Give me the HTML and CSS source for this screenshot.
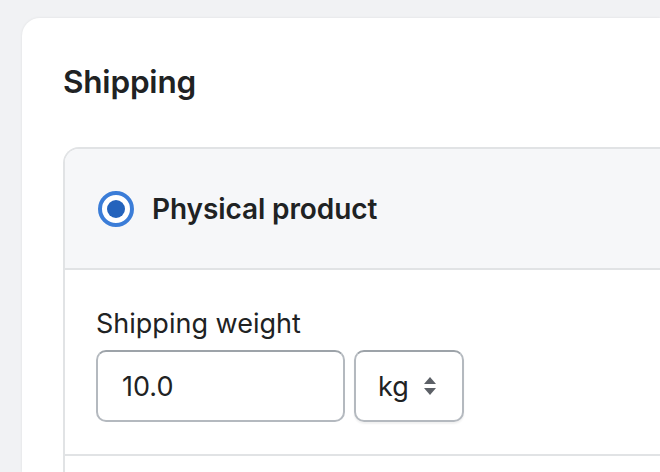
FILE: index.html
```html
<!DOCTYPE html>
<html>
<head>
<meta charset="utf-8">
<link rel="stylesheet" href="styles.css">
</head>
<body>
<div class="card">
  <h2 class="title">Shipping</h2>
  <div class="box">
    <div class="box-head">
      <span class="radio"><span class="dot"></span></span>
      <span class="option">Physical product</span>
    </div>
    <div class="box-body">
      <div class="label">Shipping weight</div>
      <div class="fields">
        <div class="input">10.0</div>
        <div class="select">
          <span>kg</span>
          <svg class="arrows" width="14" height="20" viewBox="0 0 14 20"><path d="M7 1 L13 8 H1 Z" fill="#5c6066"/><path d="M7 19 L13 12 H1 Z" fill="#5c6066"/></svg>
        </div>
      </div>
    </div>
    <div class="box-next"></div>
  </div>
</div>
</body>
</html>
```
FILE: styles.css
```css
html, body {
  margin: 0;
  padding: 0;
}
body {
  background: #f1f2f4;
  font-family: Inter, "Noto Sans", sans-serif;
  color: #202223;
  width: 660px;
  height: 472px;
  overflow: hidden;
  padding: 18px 0 0 22px;
  box-sizing: border-box;
}
.card {
  background: #fff;
  border-radius: 18px 0 0 0;
  box-shadow: 0 0 3px rgba(0,0,0,0.08);
  padding: 48px 0 0 41px;
  width: 638px;
  height: 454px;
  box-sizing: border-box;
  overflow: hidden;
}
.title {
  margin: 0;
  font-size: 31.5px;
  font-weight: 600;
  line-height: 32px;
  letter-spacing: -0.2px;
}
.box {
  margin-top: 49px;
  border: 2px solid #e1e3e5;
  border-right: none;
  border-bottom: none;
  border-radius: 16px 0 0 0;
  overflow: hidden;
}
.box-head {
  background: #f6f7f9;
  height: 119px;
  display: flex;
  align-items: center;
  padding-left: 33px;
  border-bottom: 2px solid #e1e3e5;
}
.radio {
  width: 36px;
  height: 36px;
  border-radius: 50%;
  border: 4px solid #3b7dd8;
  box-sizing: border-box;
  display: flex;
  align-items: center;
  justify-content: center;
  background: #fff;
}
.dot {
  width: 18px;
  height: 18px;
  border-radius: 50%;
  background: #2463bc;
}
.option {
  margin-left: 18px;
  font-size: 28px;
  font-weight: 600;
  letter-spacing: -0.1px;
}
.box-body {
  padding: 36px 0 32px 31px;
  border-bottom: 2px solid #e1e3e5;
}
.label {
  font-size: 27px;
  line-height: 36px;
  margin-bottom: 8px;
}
.fields {
  display: flex;
  gap: 9px;
}
.input, .select {
  height: 72px;
  box-sizing: border-box;
  border: 2px solid #b4b9bf;
  border-top-color: #9da3a9;
  border-radius: 10px;
  display: flex;
  align-items: center;
  font-size: 27px;
}
.input {
  width: 249px;
  padding-left: 24px;
}
.select {
  width: 110px;
  padding-left: 22px;
  gap: 14px;
  box-shadow: 0 2px 2px rgba(0,0,0,0.06);
}
.box-next {
  height: 60px;
}
```
